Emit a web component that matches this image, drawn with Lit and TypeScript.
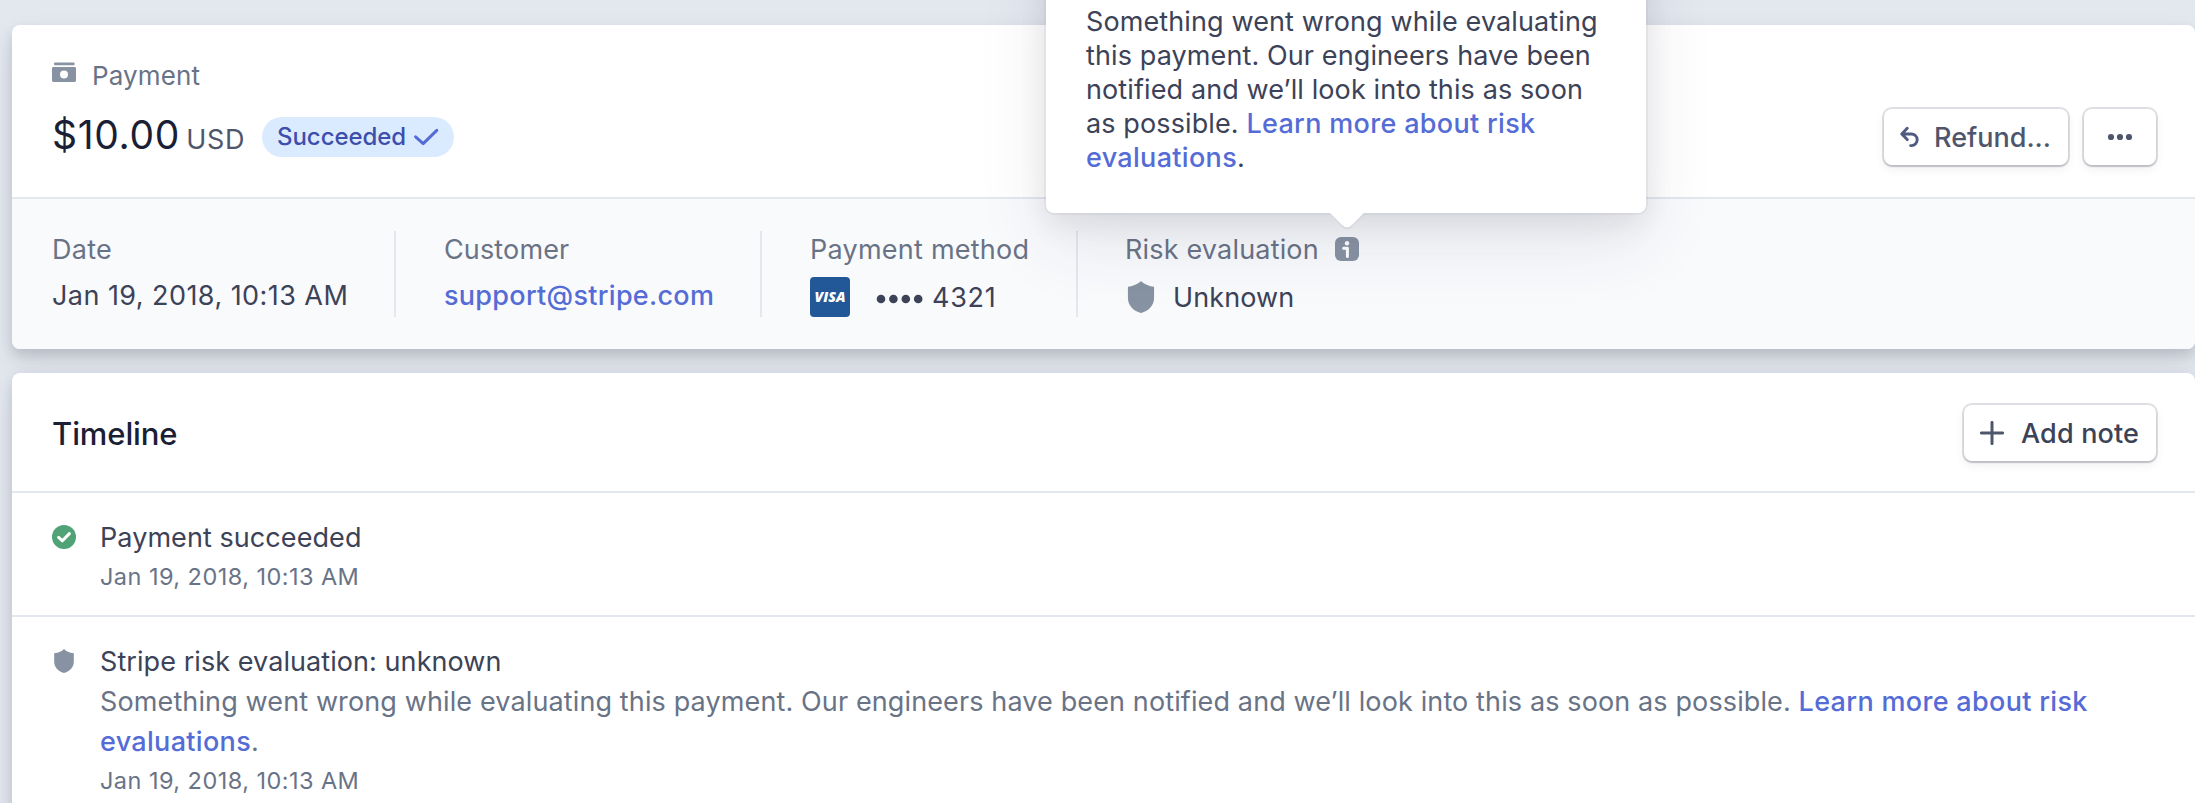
import { LitElement, html, css, svg } from "lit";
import { customElement } from "lit/decorators.js";

const shieldPath =
  "M12 0C13.6 1.9 17.6 3.8 21.8 4.3V12.5C21.8 18 18.2 22.3 12 24C5.8 22.3 2.2 18 2.2 12.5V4.3C6.4 3.8 10.4 1.9 12 0Z";

const icons = {
  payment: svg`<rect x="2" y="0.4" width="20.6" height="2.8" rx="1"/><path fill-rule="evenodd" d="M1.4 5H22.6A1.4 1.4 0 0 1 24 6.4V18.6A1.4 1.4 0 0 1 22.6 20H1.4A1.4 1.4 0 0 1 0 18.6V6.4A1.4 1.4 0 0 1 1.4 5ZM12 8.4A4 4 0 1 0 12 16.4A4 4 0 1 0 12 8.4Z"/>`,
};

@customElement("app-root")
export class AppRoot extends LitElement {
  static styles = css`
    :host {
      display: block;
      position: relative;
      box-sizing: border-box;
      height: 803px;
      padding: 25px 0 0 12px;
      overflow: hidden;
      background: #e3e7ee;
      font-family: Inter, "Liberation Sans", sans-serif;
      font-size: 27px;
      line-height: 40px;
      letter-spacing: 0.11px;
      color: #3c4257;
    }
    svg { display: block; flex: none; }
    .card {
      border-radius: 8px;
      background: #fff;
      box-shadow: 0 14px 28px rgba(60, 66, 87, 0.12), 0 6px 12px rgba(0, 0, 0, 0.12);
    }
    .timeline { margin-top: 24px; height: 460px; }
    .summary {
      display: flex;
      justify-content: space-between;
      align-items: flex-start;
      box-sizing: border-box;
      height: 174px;
      padding: 31px 39px 0 40px;
      border-bottom: 2px solid #e3e7ee;
    }
    .type {
      display: flex;
      align-items: flex-start;
      gap: 16px;
      font-size: 26px;
      color: #697386;
    }
    .type svg { margin-top: 6px; fill: #8792a2; }
    .amount-row { display: flex; align-items: flex-start; margin-top: 15px; line-height: 48px; }
    .sum { width: 210px; white-space: nowrap; display: flex; align-items: baseline; }
    .amount { font-size: 39px; letter-spacing: 0.7px; color: #1a1f36; }
    .currency { margin-left: 6px; letter-spacing: 0.7px; color: #4f566b; }
    .badge {
      display: flex;
      align-items: center;
      justify-content: space-between;
      box-sizing: border-box;
      width: 192px;
      height: 40px;
      margin-top: 6px;
      padding: 0 15px;
      border-radius: 20px;
      background: #dbebff;
      color: #3d4eac;
      font-size: 24px;
      font-weight: 500;
      line-height: 40px;
      letter-spacing: -0.05px;
    }
    .actions { display: flex; gap: 16px; margin-top: 53px; }
    .button {
      display: flex;
      align-items: center;
      box-sizing: border-box;
      height: 56px;
      padding: 0 16px;
      border: 0;
      border-radius: 8px;
      background: #fff;
      box-shadow: 0 0 0 2px rgba(60, 66, 87, 0.16), 0 2px 2px rgba(0, 0, 0, 0.12), 0 4px 10px rgba(60, 66, 87, 0.08);
      color: #4f566b;
      font: inherit;
      font-weight: 500;
      letter-spacing: 0.16px;
      white-space: nowrap;
    }
    .button span { margin-top: 2px; }
    .refund { width: 184px; gap: 14px; letter-spacing: 0; }
    .more { width: 72px; justify-content: center; }
    .add { width: 192px; gap: 17px; color: #3c4257; }
    .details {
      display: grid;
      grid-template-columns: 344px 366px 316px 1fr;
      box-sizing: border-box;
      height: 150px;
      padding: 32px 0 32px 40px;
      border-radius: 0 0 8px 8px;
      background: #f9fafc;
    }
    .cell { padding-left: 48px; border-right: 2px solid #e3e7ee; }
    .cell:first-child { padding-left: 0; }
    .cell:last-child { padding-left: 47px; border-right: 0; }
    .label { display: flex; align-items: center; height: 38px; line-height: 38px; color: #697386; letter-spacing: 0.24px; }
    .value { display: flex; align-items: center; height: 36px; margin-top: 9px; line-height: 36px; }
    .lower { margin-top: 11px; }
    .tight { letter-spacing: 0.14px; }
    .date { letter-spacing: 0.44px; }
    .mail { color: #556cd6; font-weight: 500; letter-spacing: 0.29px; }
    .visa { margin: -3px 0 -1px; }
    .dots { margin: 2px 8px 0 26px; }
    .digits { letter-spacing: 0.7px; }
    .risk { letter-spacing: 0.18px; }
    .info { margin: 0 0 2px 16px; }
    .shield { margin: 0 16px 2px 0; fill: #8792a2; }
    .head {
      display: flex;
      justify-content: space-between;
      align-items: center;
      box-sizing: border-box;
      height: 120px;
      padding: 2px 39px 0 40px;
      border-bottom: 2px solid #e3e7ee;
    }
    .title { margin: 0; padding-top: 2px; font-size: 31px; font-weight: 500; letter-spacing: -0.1px; color: #1a1f36; }
    .event { display: flex; gap: 24px; padding: 25px 90px 18px 40px; }
    .event + .event { border-top: 2px solid #e3e7ee; }
    .event > svg { margin-top: 7px; }
    .name { letter-spacing: 0.07px; }
    .note { color: #697386; letter-spacing: 0.122px; }
    .time { margin-top: -1px; color: #697386; font-size: 23.5px; letter-spacing: 0.45px; }
    a { color: #556cd6; font-weight: 500; letter-spacing: 0.32px; text-decoration: none; }
    .tooltip {
      position: absolute;
      left: 1046px;
      top: -60px;
      box-sizing: border-box;
      width: 600px;
      height: 273px;
      padding: 65px 38px 0 40px;
      border-radius: 8px;
      background: #fff;
      box-shadow: 0 0 0 2px rgba(136, 152, 170, 0.1), 0 30px 70px rgba(49, 49, 93, 0.1), 0 10px 30px rgba(0, 0, 0, 0.08);
      line-height: 34px;
    }
    .arrow { position: absolute; left: 283px; top: 273px; }
  `;

  render() {
    return html`
      <section class="card">
        <header class="summary">
          <div>
            <div class="type">
              <svg width="24" height="20" viewBox="0 0 24 20">${icons.payment}</svg>
              <span>Payment</span>
            </div>
            <div class="amount-row">
              <div class="sum">
                <span class="amount">$10.00</span>
                <span class="currency">USD</span>
              </div>
              <span class="badge">
                <span>Succeeded</span>
                <svg width="26" height="20" viewBox="0 0 26 20" fill="none" stroke="#556cd6" stroke-width="3" stroke-linecap="round" stroke-linejoin="round"><path d="M2.6 9.8L10.2 16.6L23.8 3.4"/></svg>
              </span>
            </div>
          </div>
          <div class="actions">
            <button class="button refund">
              <svg width="20" height="22" viewBox="0 0 20 22" fill="none" stroke="#4f5b80" stroke-width="2.9" stroke-linecap="round" stroke-linejoin="round"><path d="M7.2 2.2L1.8 8L7.2 13.6M2.2 8H11.2A5.7 5.7 0 0 1 11.6 19.6H10.6"/></svg>
              <span>Refund...</span>
            </button>
            <button class="button more" aria-label="More">
              <svg width="26" height="8" viewBox="0 0 26 8" fill="#4f566b"><circle cx="4" cy="4" r="3.1"/><circle cx="13" cy="4" r="3.1"/><circle cx="22" cy="4" r="3.1"/></svg>
            </button>
          </div>
        </header>
        <div class="details">
          <div class="cell">
            <div class="label">Date</div>
            <div class="value date">Jan 19, 2018, 10:13 AM</div>
          </div>
          <div class="cell">
            <div class="label tight">Customer</div>
            <div class="value mail">support@stripe.com</div>
          </div>
          <div class="cell">
            <div class="label">Payment method</div>
            <div class="value lower">
              <svg class="visa" width="40" height="40" viewBox="0 0 40 40">
                <rect width="40" height="40" rx="4" fill="#225898"/>
                <text x="4.5" y="25" textLength="31" lengthAdjust="spacingAndGlyphs" font-family="Open Sans, sans-serif" font-size="14" font-weight="800" font-style="italic" letter-spacing="0" fill="#fff">VISA</text>
              </svg>
              <svg class="dots" width="48" height="10" viewBox="0 0 48 10" fill="#3c4257"><circle cx="5" cy="5" r="4.3"/><circle cx="17.4" cy="5" r="4.3"/><circle cx="29.8" cy="5" r="4.3"/><circle cx="42.2" cy="5" r="4.3"/></svg>
              <span class="digits">4321</span>
            </div>
          </div>
          <div class="cell">
            <div class="label risk">
              <span>Risk evaluation</span>
              <svg class="info" width="24" height="24" viewBox="0 0 24 24"><rect width="24" height="24" rx="6" fill="#8792a2"/><circle cx="12" cy="6.3" r="2.2" fill="#fff"/><path d="M8.6 11.2H12.4V19.4" fill="none" stroke="#fff" stroke-width="3" stroke-linecap="round" stroke-linejoin="round"/></svg>
            </div>
            <div class="value lower">
              <svg class="shield" width="32" height="32" viewBox="0 0 24 24"><path d=${shieldPath}/></svg>
              <span>Unknown</span>
            </div>
          </div>
        </div>
      </section>

      <section class="card timeline">
        <header class="head">
          <h2 class="title">Timeline</h2>
          <button class="button add">
            <svg width="24" height="24" viewBox="0 0 24 24" fill="none" stroke="#4f566b" stroke-width="3" stroke-linecap="round"><path d="M12 1.4V22.6M1.4 12H22.6"/></svg>
            <span>Add note</span>
          </button>
        </header>
        <div class="event">
          <svg width="24" height="24" viewBox="0 0 24 24"><circle cx="12" cy="12" r="12" fill="#50a377"/><path d="M6.6 12.4L10.4 15.8L17.4 8.6" fill="none" stroke="#fff" stroke-width="3" stroke-linecap="round" stroke-linejoin="round"/></svg>
          <div>
            <div class="name">Payment succeeded</div>
            <div class="time">Jan 19, 2018, 10:13 AM</div>
          </div>
        </div>
        <div class="event">
          <svg width="24" height="24" viewBox="0 0 24 24" fill="#8792a2"><path d=${shieldPath}/></svg>
          <div>
            <div class="name">Stripe risk evaluation: unknown</div>
            <div class="note">Something went wrong while evaluating this payment. Our engineers have been notified and we’ll look into this as soon as possible. <a>Learn more about risk evaluations</a>.</div>
            <div class="time">Jan 19, 2018, 10:13 AM</div>
          </div>
        </div>
      </section>

      <div class="tooltip" role="tooltip">
        Something went wrong while evaluating this payment. Our engineers have been notified and we’ll look into this as soon as possible. <a>Learn more about risk evaluations</a>.
        <svg class="arrow" width="36" height="18" viewBox="0 0 36 18"><path d="M1 0L12.5 12.4Q18 18 23.5 12.4L36 0Z" transform="translate(0 1)" fill="#8898aa" fill-opacity="0.14"/><path d="M0 -1L1 0L12.5 11.4Q18 17 23.5 11.4L35 0V-1Z" fill="#fff"/></svg>
      </div>
    `;
  }
}
